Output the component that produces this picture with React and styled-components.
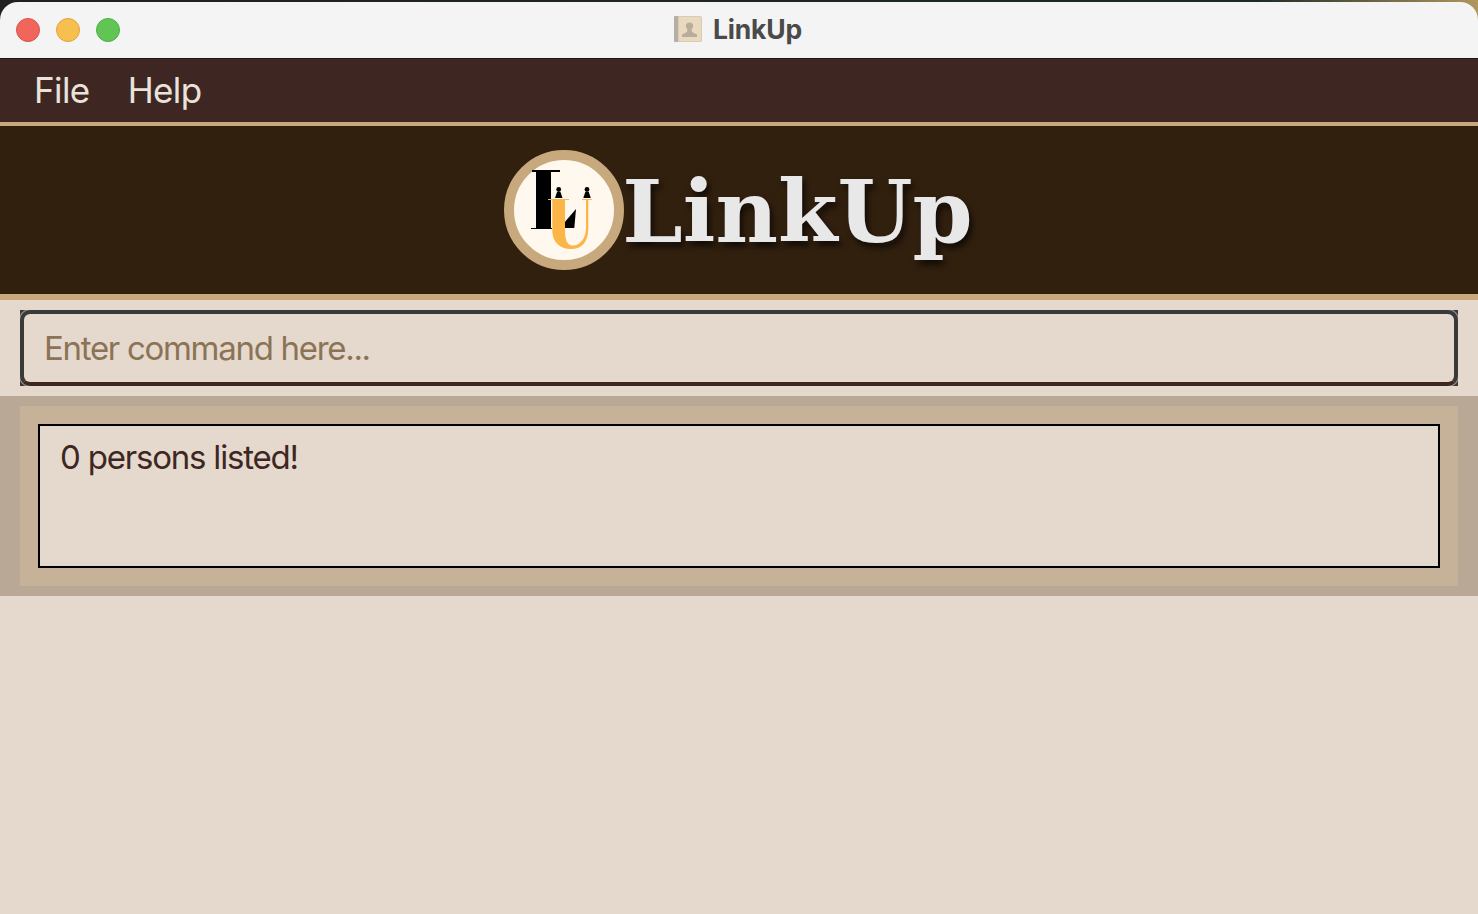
import React from "react";
import styled, { createGlobalStyle } from "styled-components";

const GlobalStyle = createGlobalStyle`
  html, body {
    margin: 0;
    padding: 0;
    background: #e5d9cd;
  }
  * {
    box-sizing: border-box;
  }
`;

const Window = styled.div`
  width: 1478px;
  height: 914px;
  display: flex;
  flex-direction: column;
  overflow: hidden;
  font-family: Inter, "Liberation Sans", sans-serif;
  background: #e5d9cd;
`;

// Strip of desktop wallpaper that shows above and around the rounded title bar
const Desktop = styled.div`
  padding-top: 2px;
  background: linear-gradient(90deg, #1f2022 0%, #1d2a25 85%, #b0975c 100%);
`;

const TitleBar = styled.div`
  height: 56px;
  display: flex;
  align-items: center;
  position: relative;
  padding-left: 16px;
  gap: 16px;
  background: #f4f4f5;
  border-radius: 18px 18px 0 0;
`;

const Light = styled.span`
  width: 24px;
  height: 24px;
  border-radius: 50%;
  background: ${({ $fill }) => $fill};
  border: 1px solid ${({ $edge }) => $edge};
`;

const WindowTitle = styled.div`
  position: absolute;
  left: 674px;
  top: 11px;
  display: flex;
  align-items: center;
  gap: 11px;
  font-size: 26.5px;
  font-weight: 700;
  letter-spacing: -0.2px;
  color: #4a4a4a;
`;

const MenuBar = styled.div`
  height: 68px;
  display: flex;
  align-items: flex-start;
  gap: 38px;
  padding: 11px 0 0 34px;
  background: #3e2723;
  border-top: 1px solid #241512;
  border-bottom: 4px solid #c8a97e;
`;

const MenuItem = styled.span`
  font-size: 35px;
  line-height: 40px;
  letter-spacing: -0.6px;
  color: #eae3dc;
`;

const Banner = styled.div`
  height: 174px;
  display: flex;
  align-items: flex-start;
  justify-content: center;
  padding: 24px 1px 0 0;
  background: #32200f;
  border-bottom: 6px solid #c8a97e;
`;

const BannerLogo = styled.svg`
  width: 120px;
  height: 120px;
  flex-shrink: 0;
`;

const BannerName = styled.div`
  margin-left: -2px;
  font-family: "DejaVu Serif", serif;
  font-weight: 700;
  font-size: 86px;
  line-height: 124px;
  color: #e8e8e8;
  text-shadow: 3px 5px 6px rgba(0, 0, 0, 0.65);
`;

const CommandArea = styled.div`
  padding: 10px 20px;
`;

// Square dark backing: only its corners show behind the rounded field
const CommandFrame = styled.div`
  height: 76px;
  background: #3a3a3a;
  overflow: hidden;
`;

const CommandInput = styled.div`
  height: 100%;
  display: flex;
  align-items: center;
  padding-left: 20px;
  background: #e5d9cd;
  border: 4px solid #3a3a3a;
  border-bottom-color: #3e2723;
  border-radius: 10px;
  box-shadow: 0 0 0 1px rgba(229, 217, 205, 0.55);
  font-size: 33px;
  letter-spacing: -1.3px;
  color: #8b7355;
`;

const ResultOuter = styled.div`
  padding: 10px 20px;
  background: #b8a895;
`;

const ResultInner = styled.div`
  padding: 18px;
  background: #c6b299;
`;

const ResultBox = styled.div`
  height: 144px;
  padding: 10px 20px;
  background: #e5d9cd;
  border: 2px solid #000;
  font-size: 33px;
  line-height: 42px;
  letter-spacing: -1.2px;
  color: #3e2723;
`;

const BookIcon = () => (
  <svg width="28" height="28" viewBox="0 0 28 28">
    <rect x="0" y="1" width="6" height="26" rx="1" fill="#b3aea6" />
    <rect x="4" y="1" width="24" height="26" rx="1.5" fill="#e9dabf" />
    <rect x="4.5" y="1.5" width="23" height="25" rx="1.5" fill="none" stroke="#d9ccb6" />
    <circle cx="15.5" cy="11" r="3.6" fill="#b8ad9c" />
    <path d="M13.5 14 L17.5 14 L18 17 L23 19.5 L23 22 L8 22 L8 19.5 L13 17 Z" fill="#b8ad9c" />
  </svg>
);

const Logo = () => (
  <BannerLogo viewBox="0 0 120 120">
    <circle cx="60" cy="60" r="55" fill="#fff8ee" stroke="#c8a97e" strokeWidth="10" />
    {/* the I */}
    <path d="M28 20 H56 V22 H47 V78 H48 V79 H27 V78 H32 V22 H28 Z" fill="#000" />
    {/* the little people */}
    <circle cx="54.7" cy="39.5" r="2.4" fill="#000" />
    <path d="M53 42 H56.5 L58.5 48 H51 Z" fill="#000" />
    <circle cx="83" cy="39.5" r="2.4" fill="#000" />
    <path d="M81.3 42 H84.8 L86.8 48 H79.3 Z" fill="#000" />
    {/* the diagonal */}
    <path d="M72 59 L70.3 78 H61 V71.7 Z" fill="#000" />
    {/* the U */}
    <path
      d="M44 49 H65 V50 H61 V80 C61 90 63 95.5 69 95.5 C76 95.5 82 88 82 78 V50 H78 V49 H87.7 V50 H84.3 V78 C84.3 92 78 99 67 99 C58 99 48.3 94 48.3 80 V50 H44 Z"
      fill="#fbb647"
    />
  </BannerLogo>
);

const App = () => {
  return (
    <Window>
      <GlobalStyle />
      <Desktop>
        <TitleBar>
          <Light $fill="#f0665c" $edge="#d9534a" />
          <Light $fill="#f6bf4f" $edge="#dfa53c" />
          <Light $fill="#61c554" $edge="#4fae45" />
          <WindowTitle>
            <BookIcon />
            LinkUp
          </WindowTitle>
        </TitleBar>
      </Desktop>
      <MenuBar>
        <MenuItem>File</MenuItem>
        <MenuItem>Help</MenuItem>
      </MenuBar>
      <Banner>
        <Logo />
        <BannerName>LinkUp</BannerName>
      </Banner>
      <CommandArea>
        <CommandFrame>
          <CommandInput>Enter command here...</CommandInput>
        </CommandFrame>
      </CommandArea>
      <ResultOuter>
        <ResultInner>
          <ResultBox>0 persons listed!</ResultBox>
        </ResultInner>
      </ResultOuter>
    </Window>
  );
};

export default App;
